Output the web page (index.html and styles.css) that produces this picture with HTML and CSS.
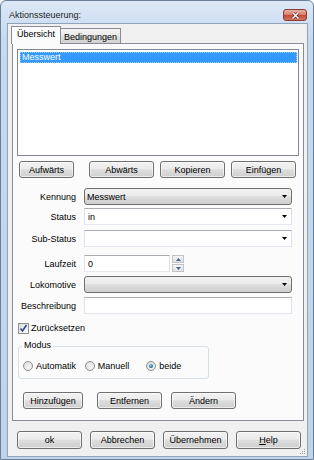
FILE: index.html
```html
<!DOCTYPE html>
<html lang="de">
<head>
    <meta charset="UTF-8">
    <title>Aktionssteuerung</title>
    <link rel="stylesheet" href="styles.css">
</head>
<body>
    <div class="window">
        <div class="titlebar">
            <span class="title">Aktionssteuerung:</span>
            <span class="close">
                <svg width="9" height="7" viewBox="0 0 9 7"><path d="M1.5 0.5 L7.5 6.5 M7.5 0.5 L1.5 6.5" stroke="#5a1e16" stroke-width="2.6"/><path d="M1.5 0.5 L7.5 6.5 M7.5 0.5 L1.5 6.5" stroke="#fff" stroke-width="1.5"/></svg>
            </span>
        </div>
        <div class="client">
            <div class="tabs">
                <div class="tab active">Übersicht</div>
                <div class="tab">Bedingungen</div>
            </div>
            <div class="tabpage">
                <div class="listbox">
                    <div class="item selected">Messwert</div>
                </div>
                <div class="btnrow toprow">
                    <div class="btn w55">Aufwärts</div>
                    <div class="btn w65 gap-wide">Abwärts</div>
                    <div class="btn w65">Kopieren</div>
                    <div class="btn w65">Einfügen</div>
                </div>

                <div class="field f-kennung">
                    <div class="label">Kennung</div>
                    <div class="combo readonly"><span>Messwert</span><svg class="arrow" width="5" height="3" viewBox="0 0 5 3"><path d="M0 0h5l-2.5 3z"/></svg></div>
                </div>
                <div class="field f-status">
                    <div class="label">Status</div>
                    <div class="combo editable"><span>in</span><svg class="arrow" width="5" height="3" viewBox="0 0 5 3"><path d="M0 0h5l-2.5 3z"/></svg></div>
                </div>
                <div class="field f-sub">
                    <div class="label">Sub-Status</div>
                    <div class="combo editable"><span></span><svg class="arrow" width="5" height="3" viewBox="0 0 5 3"><path d="M0 0h5l-2.5 3z"/></svg></div>
                </div>
                <div class="field f-laufzeit">
                    <div class="label">Laufzeit</div>
                    <div class="textbox short">0</div>
                    <div class="spinner">
                        <div class="spin"><svg width="5" height="3" viewBox="0 0 5 3"><path d="M0 3h5l-2.5-3z"/></svg></div>
                        <div class="spin"><svg width="5" height="3" viewBox="0 0 5 3"><path d="M0 0h5l-2.5 3z"/></svg></div>
                    </div>
                </div>
                <div class="field f-lok">
                    <div class="label">Lokomotive</div>
                    <div class="combo readonly"><span></span><svg class="arrow" width="5" height="3" viewBox="0 0 5 3"><path d="M0 0h5l-2.5 3z"/></svg></div>
                </div>
                <div class="field f-beschr">
                    <div class="label">Beschreibung</div>
                    <div class="textbox"></div>
                </div>

                <div class="check">
                    <span class="checkbox"><svg width="9" height="9" viewBox="0 0 9 9"><path d="M1.5 4.5 L3.5 7 L7.5 1" fill="none" stroke="#2a4a8a" stroke-width="1.6"/></svg></span>
                    <span>Zurücksetzen</span>
                </div>

                <div class="group">
                    <div class="group-title">Modus</div>
                    <div class="radios">
                        <div class="radio"><span class="dot"></span>Automatik</div>
                        <div class="radio"><span class="dot"></span>Manuell</div>
                        <div class="radio"><span class="dot on"></span>beide</div>
                    </div>
                </div>

                <div class="btnrow editrow">
                    <div class="btn w60">Hinzufügen</div>
                    <div class="btn w65 gap-14">Entfernen</div>
                    <div class="btn w65 gap-9">Ändern</div>
                </div>
            </div>

            <div class="btnrow dialogrow">
                <div class="btn dlg">ok</div>
                <div class="btn dlg">Abbrechen</div>
                <div class="btn dlg">Übernehmen</div>
                <div class="btn dlg"><span><u>H</u>elp</span></div>
            </div>

            <svg class="grip" width="6" height="6" viewBox="0 0 6 6">
                <rect x="4" y="0" width="1" height="1" fill="#a0a0a0"/>
                <rect x="2" y="2" width="1" height="1" fill="#a0a0a0"/>
                <rect x="4" y="2" width="1" height="1" fill="#a0a0a0"/>
                <rect x="0" y="4" width="1" height="1" fill="#a0a0a0"/>
                <rect x="2" y="4" width="1" height="1" fill="#a0a0a0"/>
                <rect x="4" y="4" width="1" height="1" fill="#a0a0a0"/>
            </svg>
        </div>
    </div>
</body>
</html>
```

FILE: styles.css
```css
body {
    margin: 0;
    font-family: "Liberation Sans", Arial, sans-serif;
    font-size: 9px;
    color: #000;
}
.window {
    width: 314px;
    height: 460px;
    box-sizing: border-box;
    border: 1px solid #6b7f97;
    border-radius: 6px 6px 0 0;
    background: linear-gradient(#dce8f6, #c5d9ef 40px, #bfd4ec);
    padding: 0 5px 2px 6px;
    display: flex;
    flex-direction: column;
}
.titlebar {
    height: 22px;
    box-sizing: border-box;
    padding: 6px 1px 0 2px;
    display: flex;
    align-items: center;
    justify-content: space-between;
}
.title {
    color: #1e1e1e;
}
.close {
    width: 24px;
    height: 12px;
    box-sizing: border-box;
    border: 1px solid #8a3d34;
    border-radius: 3px;
    background: linear-gradient(#eab0a5, #d98070 45%, #c94b38 55%, #d2735f);
    display: flex;
    align-items: center;
    justify-content: center;
}
.client {
    flex: 1;
    position: relative;
    border: 1px solid #8fa3bb;
    background: #f0f0f0;
    display: flex;
    flex-direction: column;
}
.tabs {
    height: 19px;
    padding-left: 3px;
    display: flex;
    align-items: flex-end;
}
.tab {
    height: 15px;
    box-sizing: border-box;
    padding: 3px 3px 0;
    line-height: 11px;
    border: 1px solid #898c95;
    border-bottom: none;
    background: linear-gradient(#f3f3f3, #ebebeb 45%, #dedede 55%, #d2d2d2);
}
.tab.active {
    position: relative;
    z-index: 1;
    height: 18px;
    margin-bottom: -1px;
    margin-right: -1px;
    padding: 2px 5px 0;
    background: #fbfbfb;
}
.tabpage {
    margin-left: 4px;
    width: 292px;
    height: 378px;
    box-sizing: border-box;
    border: 1px solid #898c95;
    background: #fbfbfb;
    display: flex;
    flex-direction: column;
    align-items: flex-start;
}
.listbox {
    margin: 5px 0 0 4px;
    width: 282px;
    height: 107px;
    box-sizing: border-box;
    border: 1px solid #828790;
    background: #fff;
}
.item {
    height: 11px;
    line-height: 11px;
    padding-left: 2px;
}
.item.selected {
    margin: 2px 1px 0 2px;
    box-sizing: border-box;
    background: #3399ff;
    color: #fff;
    outline: 1px dotted #9ccbf5;
    outline-offset: -1px;
}
.btnrow {
    display: flex;
}
.btn {
    height: 17px;
    box-sizing: border-box;
    border: 1px solid #707070;
    border-radius: 3px;
    background: linear-gradient(#f2f2f2, #ebebeb 45%, #dddddd 52%, #cfcfcf);
    box-shadow: inset 0 0 0 1px rgba(255, 255, 255, 0.6);
    display: flex;
    align-items: center;
    justify-content: center;
}
.w55 { width: 55px; }
.w60 { width: 60px; }
.w65 { width: 65px; }
.toprow {
    margin: 5px 0 0 6px;
    gap: 6px;
}
.gap-wide { margin-left: 9px; }
.field {
    height: 17px;
    display: flex;
    align-items: center;
}
.f-kennung { margin-top: 10px; }
.f-status { margin-top: 3px; }
.f-sub { margin-top: 5px; }
.f-laufzeit { margin-top: 8px; }
.f-lok { margin-top: 4px; }
.f-beschr { margin-top: 4px; }
.label {
    width: 63px;
    margin-right: 8px;
    text-align: right;
}
.combo {
    width: 208px;
    height: 17px;
    box-sizing: border-box;
    display: flex;
    align-items: center;
    justify-content: space-between;
    padding: 0 3px 0 2px;
}
.combo.readonly {
    border: 1px solid #707070;
    border-radius: 3px;
    background: linear-gradient(#f2f2f2, #ebebeb 45%, #dddddd 52%, #cfcfcf);
}
.combo.editable {
    border: 1px solid;
    border-color: #abadb3 #dbdfe6 #e3e9ef #e2e3ea;
    background: #fff;
    padding-left: 3px;
}
.arrow {
    margin-right: 1px;
}
.textbox {
    width: 208px;
    height: 17px;
    box-sizing: border-box;
    border: 1px solid;
    border-color: #abadb3 #dbdfe6 #e3e9ef #e2e3ea;
    background: #fff;
    padding-left: 3px;
    display: flex;
    align-items: center;
}
.textbox.short {
    width: 86px;
}
.spinner {
    margin-left: 2px;
    height: 17px;
    display: flex;
    flex-direction: column;
    justify-content: space-between;
}
.spin {
    width: 12px;
    height: 8px;
    box-sizing: border-box;
    border: 1px solid #c3c3c3;
    background: linear-gradient(#f4f4f4, #e2e2e2);
    display: flex;
    align-items: center;
    justify-content: center;
}
.spin svg {
    fill: #4b6190;
}
.check {
    margin: 8px 0 0 5px;
    height: 12px;
    display: flex;
    align-items: center;
    gap: 2px;
}
.checkbox {
    width: 11px;
    height: 11px;
    box-sizing: border-box;
    border: 1px solid #8e8f8f;
    background: linear-gradient(135deg, #e0e0e0, #fafafa);
    display: flex;
    align-items: center;
    justify-content: center;
}
.group {
    margin: 12px 0 0 5px;
    width: 191px;
    height: 33px;
    box-sizing: border-box;
    border: 1px solid #d5dfe5;
    border-radius: 3px;
}
.group-title {
    width: fit-content;
    margin: -7px 0 0 3px;
    padding: 0 2px;
    line-height: 11px;
    background: #fbfbfb;
}
.radios {
    margin-top: 10px;
    padding-left: 4px;
    height: 10px;
    display: flex;
    align-items: center;
}
.radio {
    width: 62px;
    display: flex;
    align-items: center;
    gap: 3px;
}
.dot {
    width: 10px;
    height: 10px;
    box-sizing: border-box;
    border: 1px solid #8e8f8f;
    border-radius: 50%;
    background: radial-gradient(circle at 60% 65%, #f6f6f6, #d8d8d8);
    display: flex;
    align-items: center;
    justify-content: center;
}
.dot.on::after {
    content: "";
    width: 4px;
    height: 4px;
    border-radius: 50%;
    background: radial-gradient(circle at 40% 35%, #7fd3f5, #1a5f8f 70%, #173e6a);
}
.editrow {
    margin: 13px 0 0 10px;
}
.gap-14 { margin-left: 14px; }
.gap-9 { margin-left: 9px; }
.dialogrow {
    margin: 10px 0 0 9px;
    gap: 8px;
}
.btn.dlg {
    width: 65px;
    height: 18px;
}
.grip {
    position: absolute;
    right: 1px;
    bottom: 1px;
}
```
